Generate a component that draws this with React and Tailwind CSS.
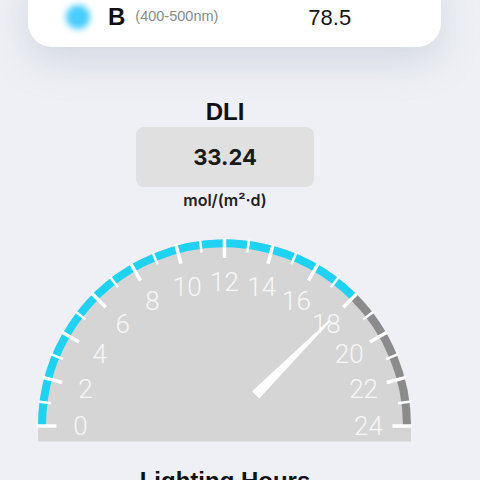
const CX = 224.5
const CY = 426
const R = 186.5

const polar = (r, value) => {
  const a = Math.PI - (value / 24) * Math.PI
  return [CX + r * Math.cos(a), CY - r * Math.sin(a)]
}

const arcPath = (r, from, to) => {
  const [x1, y1] = polar(r, from)
  const [x2, y2] = polar(r, to)
  return `M ${x1} ${y1} A ${r} ${r} 0 0 1 ${x2} ${y2}`
}

const Gauge = ({ value = 18 }) => {
  const hours = Array.from({ length: 25 }, (_, i) => i)
  const dir = polar(1, value).map((v, i) => v - (i === 0 ? CX : CY))
  const perp = [-dir[1], dir[0]]
  const pt = (r, w) => [CX + dir[0] * r + perp[0] * w, CY + dir[1] * r + perp[1] * w]
  const needle = [pt(44, 5), pt(149, 1), pt(149, -1), pt(44, -5)]
    .map(([x, y]) => `${x},${y}`)
    .join(' ')

  return (
    <svg width="480" height="230" viewBox="0 215 480 230" className="block mt-[5px]">
      <path
        d={`M ${CX - R} ${CY} A ${R} ${R} 0 0 1 ${CX + R} ${CY} L ${CX + R} 441.5 L ${CX - R} 441.5 Z`}
        fill="#d5d5d5"
      />
      <path d={arcPath(182.5, 0, value)} stroke="#1fd2f2" strokeWidth="8" fill="none" />
      <path d={arcPath(182.5, value, 24)} stroke="#8b8b8b" strokeWidth="8" fill="none" />
      {hours.map((h) => {
        const major = h % 2 === 0
        const [x1, y1] = polar(188, h)
        const [x2, y2] = polar(major ? 168 : 175, h)
        return (
          <line
            key={h}
            x1={x1}
            y1={y1}
            x2={x2}
            y2={y2}
            stroke="#ffffff"
            strokeWidth={major ? 3.5 : 2.5}
          />
        )
      })}
      {hours
        .filter((h) => h % 2 === 0)
        .map((h) => {
          const [x, y] = polar(144, h)
          return (
            <text
              key={h}
              x={x}
              y={y}
              textAnchor="middle"
              dominantBaseline="central"
              fill="#f7f7f7"
              fontSize="26"
              fontWeight="300"
              style={{ fontFamily: 'Roboto, "Liberation Sans", sans-serif' }}
            >
              {h}
            </text>
          )
        })}
      <polygon points={needle} fill="#ffffff" />
    </svg>
  )
}

export default function App() {
  return (
    <div className="min-h-screen w-[480px] overflow-hidden bg-[#eef0f5] font-['Liberation_Sans',Arial,sans-serif]">
      {/* top card, scrolled mostly out of view */}
      <div className="mx-[28px] w-[413px] -mt-[33px] rounded-[24px] bg-white pt-[30px] pb-[10px] shadow-[0_14px_38px_rgba(150,160,180,0.3)]">
        <div className="flex items-center h-[40px] pl-[36px]">
          <div className="w-[28px] h-[28px] flex items-center justify-center">
            <div className="w-[24px] h-[24px] rounded-full bg-[#48cdfc] blur-[3px]" />
          </div>
          <span className="ml-[16px] text-[24px] font-bold text-[#111]">B</span>
          <span className="ml-[10px] text-[14.5px] text-[#8a8a8a]">(400-500nm)</span>
          <span className="ml-[90px] text-[22px] text-[#151515]">78.5</span>
        </div>
      </div>

      <div className="flex flex-col items-center w-[450px]">
        <h2 className="mt-[51px] text-[24px] leading-[28px] font-bold text-[#111]">DLI</h2>
        <div className="mt-[1px] w-[178px] h-[60px] rounded-[8px] bg-[#e0e0e0] flex items-center justify-center">
          <span className="text-[22px] font-bold text-[#1a1a1a] font-['Inter',sans-serif]">33.24</span>
        </div>
        <div className="mt-[3px] text-[16px] leading-[20px] font-semibold text-[#222] font-['Inter',sans-serif]">
          mol/(m²·d)
        </div>
      </div>

      <Gauge value={18} />

      <h2 className="mt-[22px] w-[450px] text-center text-[24px] leading-[28px] font-bold text-[#111]">
        Lighting Hours
      </h2>
    </div>
  )
}
